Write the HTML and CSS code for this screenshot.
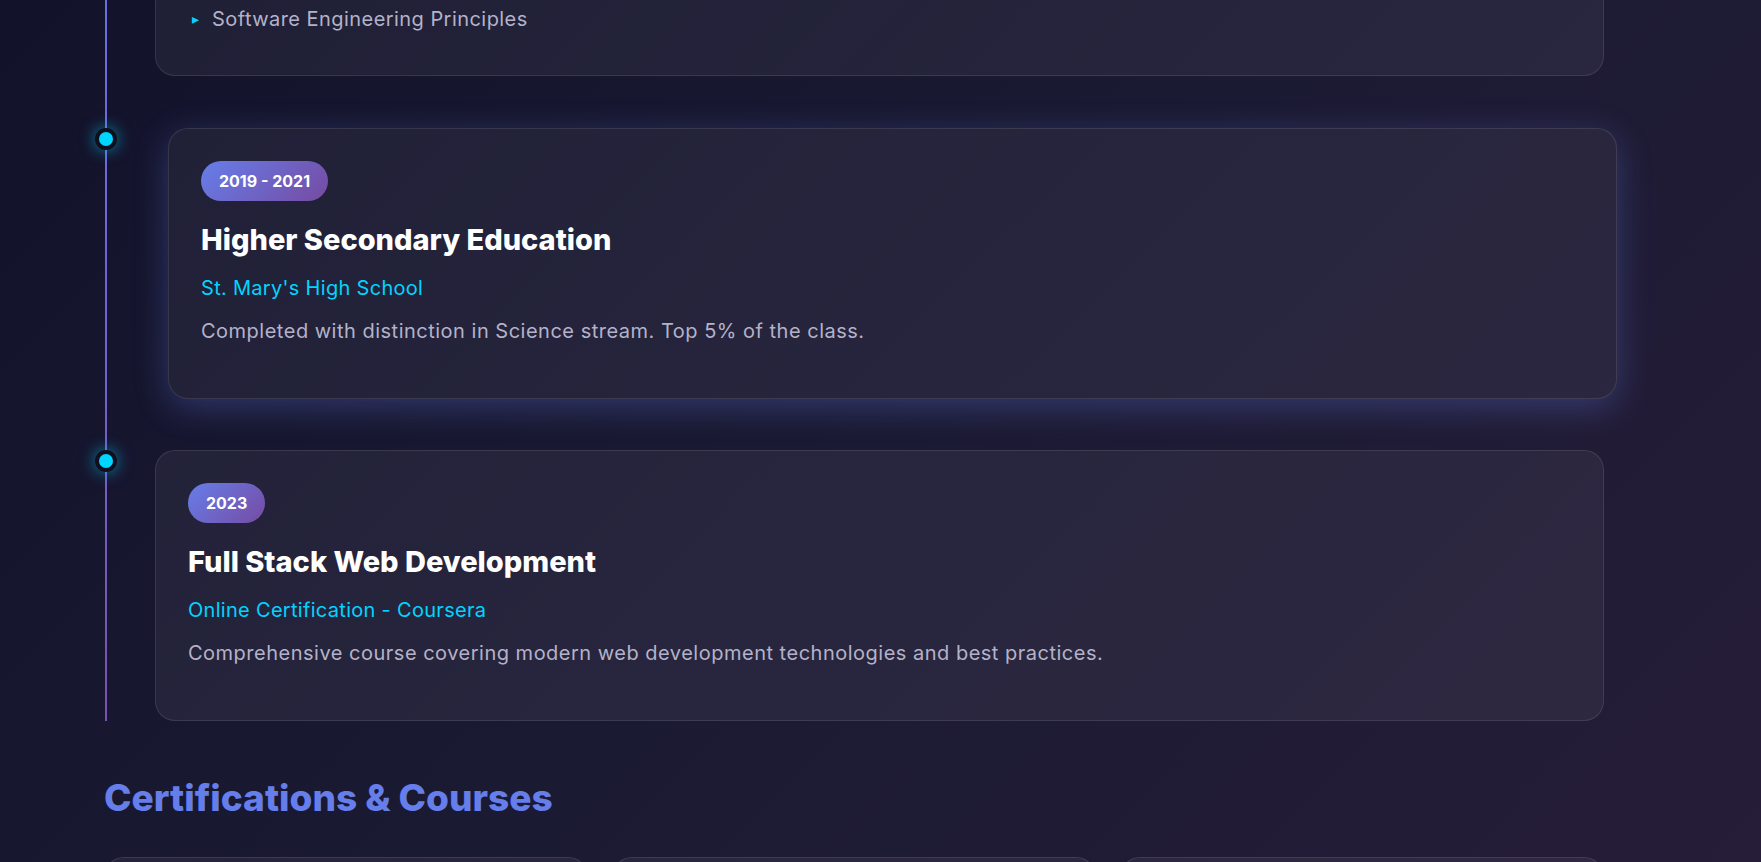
FILE: index.html
```html
<!DOCTYPE html>
<html lang="en">
<head>
<meta charset="utf-8">
<title>Education</title>
<link rel="stylesheet" href="styles.css">
</head>
<body>
<main class="page">
  <section class="timeline">
    <div class="timeline-item">
      <span class="dot"></span>
      <article class="card card-tail">
        <ul class="course-list">
          <li>Software Engineering Principles</li>
        </ul>
      </article>
    </div>
    <div class="timeline-item">
      <span class="dot"></span>
      <article class="card is-active">
        <span class="badge">2019 - 2021</span>
        <h3 class="card-title">Higher Secondary Education</h3>
        <p class="card-org">St. Mary's High School</p>
        <p class="card-desc">Completed with distinction in Science stream. Top 5% of the class.</p>
      </article>
    </div>
    <div class="timeline-item">
      <span class="dot"></span>
      <article class="card">
        <span class="badge">2023</span>
        <h3 class="card-title">Full Stack Web Development</h3>
        <p class="card-org">Online Certification - Coursera</p>
        <p class="card-desc">Comprehensive course covering modern web development technologies and best practices.</p>
      </article>
    </div>
  </section>

  <section class="certs">
    <h2 class="section-title">Certifications &amp; Courses</h2>
    <div class="cert-grid">
      <div class="cert-card"></div>
      <div class="cert-card"></div>
      <div class="cert-card"></div>
    </div>
  </section>
</main>
</body>
</html>
```

FILE: styles.css
```css
html, body {
  margin: 0;
  padding: 0;
  height: 100%;
  overflow: hidden;
}

body {
  font-family: Inter, "Noto Sans", sans-serif;
  color: #ffffff;
  background: linear-gradient(135deg, #12122a 0%, #1b1a33 50%, #261d38 100%);
}

.page {
  width: 1500px;
  margin: -28px 0 0 104px;
}

/* timeline */
.timeline {
  position: relative;
  padding-left: 51px;
}

.timeline::before {
  content: "";
  position: absolute;
  left: 1px;
  top: 0;
  bottom: 0;
  width: 2px;
  background: linear-gradient(180deg, #6a6ee0 0%, #6f63d2 50%, #7a52ae 100%);
}

.timeline-item {
  position: relative;
  margin-bottom: 51px;
}

.timeline-item:first-child {
  margin-bottom: 52px;
}

.timeline-item:first-child .dot {
  display: none;
}

.timeline-item:last-child {
  margin-bottom: 0;
}

.dot {
  position: absolute;
  left: -60px;
  top: 0;
  width: 14px;
  height: 14px;
  border-radius: 50%;
  background: #00d4ff;
  border: 4px solid #0f0f1e;
  box-shadow: 0 0 16px rgba(0, 212, 255, 0.6);
}

.card {
  display: flex;
  flex-direction: column;
  align-items: flex-start;
  padding: 32px 32px 42px;
  border-radius: 20px;
  background: linear-gradient(135deg, rgba(255, 255, 255, 0.055) 0%, rgba(255, 255, 255, 0.05) 100%);
  border: 1px solid rgba(255, 255, 255, 0.1);
}

.card-tail {
  padding-bottom: 42px;
}

.card.is-active {
  transform: translateX(13px);
  box-shadow: 0 8px 34px rgba(102, 126, 234, 0.32);
}

.badge {
  display: block;
  padding: 8px 18px;
  border-radius: 20px;
  background: linear-gradient(135deg, #667eea 0%, #764ba2 100%);
  font-size: 16px;
  line-height: 24px;
  font-weight: 700;
  color: #ffffff;
  margin-bottom: 19px;
}

.card-title {
  margin: 0 0 14px;
  font-size: 29px;
  line-height: 40px;
  font-weight: 800;
  color: #ffffff;
}

.card-org {
  margin: 0 0 15px;
  font-size: 20px;
  line-height: 28px;
  font-weight: 400;
  letter-spacing: 0.3px;
  color: #00d4ff;
}

.card-desc {
  margin: 0 0 11px;
  font-size: 20px;
  line-height: 28px;
  letter-spacing: 0.5px;
  color: #b4b2c9;
}

.course-list {
  list-style: none;
  margin: 0;
  padding: 0;
  display: flex;
  flex-direction: column;
  gap: 8px;
}

.course-list li {
  display: flex;
  align-items: center;
  font-size: 20px;
  line-height: 28px;
  letter-spacing: 0.45px;
  color: #b4b2c9;
}

.course-list li::before {
  content: "\25B8";
  font-family: "DejaVu Sans", sans-serif;
  font-size: 14px;
  letter-spacing: 0;
  color: #00d4ff;
  width: 20px;
  padding-left: 4px;
}

/* certifications */
.certs {
  margin-top: 55px;
}

.section-title {
  margin: 0 0 37px;
  font-size: 37px;
  line-height: 44px;
  font-weight: 800;
  color: #667eea;
}

.cert-grid {
  display: grid;
  grid-template-columns: repeat(3, 1fr);
  gap: 24px;
}

.cert-card {
  min-height: 220px;
  border-radius: 20px;
  background: rgba(255, 255, 255, 0.05);
  border: 1px solid rgba(255, 255, 255, 0.1);
}
```
